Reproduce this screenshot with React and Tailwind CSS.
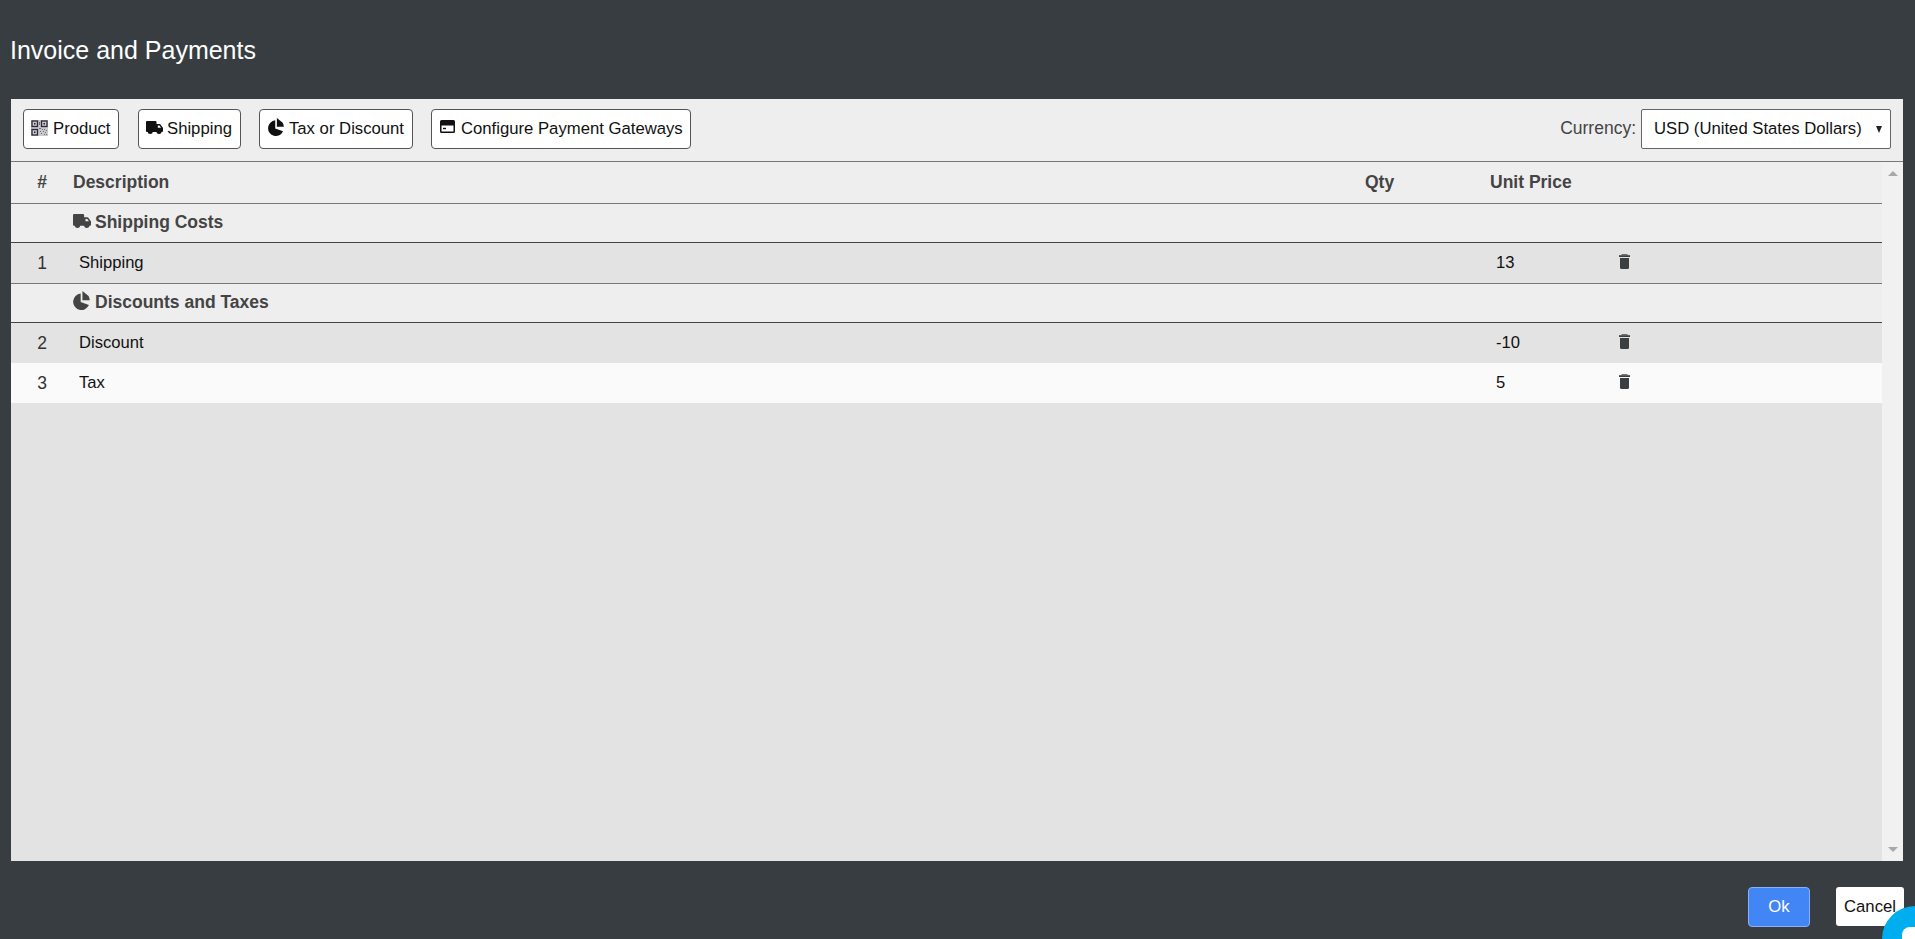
import React from "react";

const TruckIcon = ({ className, hole = "#eee" }) => (
  <svg viewBox="0 0 17 13" className={className} fill="currentColor">
    <path d="M1 0h8.500a1 1 0 0 1 1 1v2h3.200a1 1 0 0 1 .8.400l2.200 3c.2.200.3.500.3.700V10a1 1 0 0 1-1 1H1a1 1 0 0 1-1-1V1a1 1 0 0 1 1-1z" />
    <path d="M11.800 4.500h1.700l1.500 2.200h-3.200z" fill={hole} />
    <circle cx="4.200" cy="10.500" r="2.500" />
    <circle cx="13" cy="10.500" r="2.500" />
  </svg>
);

const PieIcon = ({ className }) => (
  <svg viewBox="0 0 14 17" className={className} fill="currentColor">
    <path d="M6.300 3V10.200L13.300 12.800A7 7 0 1 1 6.300 3z" />
    <path d="M7.800 0.800L13 5.200A8 8 0 0 1 14 8.800L7.800 8.800z" />
  </svg>
);

const CardIcon = ({ className }) => (
  <svg viewBox="0 0 15 13" className={className} fill="currentColor">
    <path fillRule="evenodd" d="M1.500 0h12A1.500 1.500 0 0 1 15 1.500v10a1.500 1.500 0 0 1-1.500 1.500h-12A1.500 1.500 0 0 1 0 11.500v-10A1.500 1.500 0 0 1 1.500 0zM1.500 5.500v6h12v-6z" />
    <rect x="3" y="7.800" width="3" height="1.400" />
  </svg>
);

const TrashIcon = ({ className }) => (
  <svg viewBox="0 0 11 15" className={className} fill="currentColor">
    <rect x="2.500" y="0" width="6" height="1.200" opacity="0.700" />
    <rect x="0" y="1.200" width="11" height="1.800" />
    <path d="M1 4h9v9.500a1.500 1.500 0 0 1-1.500 1.500h-6A1.500 1.500 0 0 1 1 13.500z" />
  </svg>
);

const QrIcon = ({ className }) => (
  <svg viewBox="0 0 17 16" className={className}>
    <rect width="17" height="16" fill="#c9c9c9" />
    <g fill="none" stroke="#2d2440" strokeWidth="1.300">
      <rect x="1" y="1" width="5.500" height="5.500" />
      <rect x="10.500" y="1" width="5.500" height="5.500" />
      <rect x="1" y="9.500" width="5.500" height="5.500" />
    </g>
    <rect x="3" y="3" width="1.500" height="1.500" fill="#222" />
    <rect x="12.500" y="3" width="1.500" height="1.500" fill="#222" />
    <rect x="3" y="11.500" width="1.500" height="1.500" fill="#222" />
    <g fill="#6f6f7a">
      <rect x="8" y="2" width="1" height="3" />
      <rect x="8" y="8" width="2" height="1" />
      <rect x="11" y="9" width="1" height="1" />
      <rect x="13" y="9" width="1" height="1" />
      <rect x="15" y="10" width="1" height="1" />
      <rect x="9" y="11" width="1" height="1" />
      <rect x="12" y="11" width="1" height="1" />
      <rect x="14" y="12" width="1" height="1" />
      <rect x="10" y="13" width="1" height="1" />
      <rect x="13" y="14" width="1" height="1" />
      <rect x="15" y="14" width="1" height="1" />
    </g>
  </svg>
);

const ToolButton = ({ icon, label, className }) => (
  <button className={`h-10 flex items-center border border-[#555] rounded-[4px] bg-white text-[#111] text-[16.700px] ${className}`}>
    {icon}
    {label}
  </button>
);

const rowLine = "grid grid-cols-[62px_1292px_125px_129px_1fr] items-center";

const GroupRow = ({ icon, label }) => (
  <div className={`${rowLine} h-[39px] bg-[#eee] border-b border-[#444] text-[#444] font-bold text-[17.500px]`}>
    <div />
    <div className="flex items-center gap-[4px] -mt-[2px]">
      {icon}
      {label}
    </div>
  </div>
);

const ItemRow = ({ n, label, price, className }) => (
  <div className={`${rowLine} ${className} text-[#111]`}>
    <div className="text-center text-[#333] text-[17.500px]">{n}</div>
    <div className="pl-[6px] text-[16.600px]">{label}</div>
    <div />
    <div className="pl-[6px] text-[16.600px]">{price}</div>
    <div><TrashIcon className="w-[11px] h-[15px] text-[#3c3f42] -mt-[3px]" /></div>
  </div>
);

export default function App() {
  return (
    <div className="h-[939px] overflow-hidden relative flex flex-col bg-[#373d40] font-['Liberation_Sans',Arial,sans-serif]">
      <div className="h-[99px] shrink-0 flex items-center pl-[10px] pt-[2px] text-white text-[25px]">Invoice and Payments</div>

      <div className="ml-[11px] w-[1892px] h-[762px] shrink-0 flex flex-col bg-[#e3e3e3]">
        <div className="h-[63px] shrink-0 flex items-center bg-[#eee] border-b border-[#777] pl-[12px] pr-[12px] pb-[2px]">
          <ToolButton className="w-[96px] pl-[7px] gap-[5px]" icon={<QrIcon className="w-[17px] h-[16px] -mt-[2px]" />} label="Product" />
          <ToolButton className="w-[103px] ml-[19px] pl-[7px] gap-[4px]" icon={<TruckIcon className="w-[17px] h-[13px] -mt-[3px]" hole="#fff" />} label="Shipping" />
          <ToolButton className="w-[154px] ml-[18px] pl-[8px] gap-[5px]" icon={<PieIcon className="w-[16px] h-[19px] -mt-[6px]" />} label="Tax or Discount" />
          <ToolButton className="w-[260px] ml-[18px] pl-[8px] gap-[6px]" icon={<CardIcon className="w-[15px] h-[13px] -mt-[5px]" />} label="Configure Payment Gateways" />
          <div className="ml-auto flex items-center gap-[5px]">
            <span className="text-[#444] text-[17.500px] -mt-[1px]">Currency:</span>
            <div className="w-[250px] h-10 flex items-center justify-between border border-[#666] rounded-[2px] bg-white pl-[12px] pr-[8px] text-[#111] text-[16.700px]">
              USD (United States Dollars)
              <span className="w-0 h-0 border-x-[3.500px] border-x-transparent border-t-[7px] border-t-[#222]" />
            </div>
          </div>
        </div>

        <div className="flex-1 flex min-h-0">
          <div className="flex-1 min-w-0">
            <div className={`${rowLine} h-[42px] bg-[#eee] border-b border-[#777] text-[#444] font-bold text-[17.500px]`}>
              <div className="text-center">#</div>
              <div>Description</div>
              <div>Qty</div>
              <div>Unit Price</div>
            </div>
            <GroupRow icon={<TruckIcon className="w-[18px] h-[14px] -mt-[3px]" />} label="Shipping Costs" />
            <ItemRow n="1" label="Shipping" price="13" className="h-[41px] bg-[#e3e3e3] border-b border-[#777]" />
            <GroupRow icon={<PieIcon className="w-[17px] h-[20px] -mt-[4px] mr-[1px]" />} label="Discounts and Taxes" />
            <ItemRow n="2" label="Discount" price="-10" className="h-[40px] bg-[#e3e3e3]" />
            <ItemRow n="3" label="Tax" price="5" className="h-[40px] bg-[#fafafa]" />
          </div>
          <div className="w-[21px] shrink-0 bg-[#f1f1f1] flex flex-col items-center justify-between py-[9px]">
            <span className="w-0 h-0 border-x-[5px] border-x-transparent border-b-[5px] border-b-[#a8a8a8]" />
            <span className="w-0 h-0 border-x-[5px] border-x-transparent border-t-[5px] border-t-[#a8a8a8]" />
          </div>
        </div>
      </div>

      <div className="flex-1 flex items-start justify-end pr-[11px] pt-[26px]">
        <button className="w-[62px] h-10 border border-[#8ab0f5] rounded-[4px] bg-[#4285f4] text-white text-[16.700px]">Ok</button>
        <button className="w-[68px] h-[39px] ml-[26px] rounded-[3px] bg-white text-[#111] text-[16.700px]">Cancel</button>
      </div>

      <div className="absolute left-[1882px] top-[906px] w-[66px] h-[66px] rounded-full bg-[#00aeef]">
        <div className="absolute left-[20px] top-[21px] w-[30px] h-[30px] rounded-[8px] bg-white" />
      </div>
    </div>
  );
}
